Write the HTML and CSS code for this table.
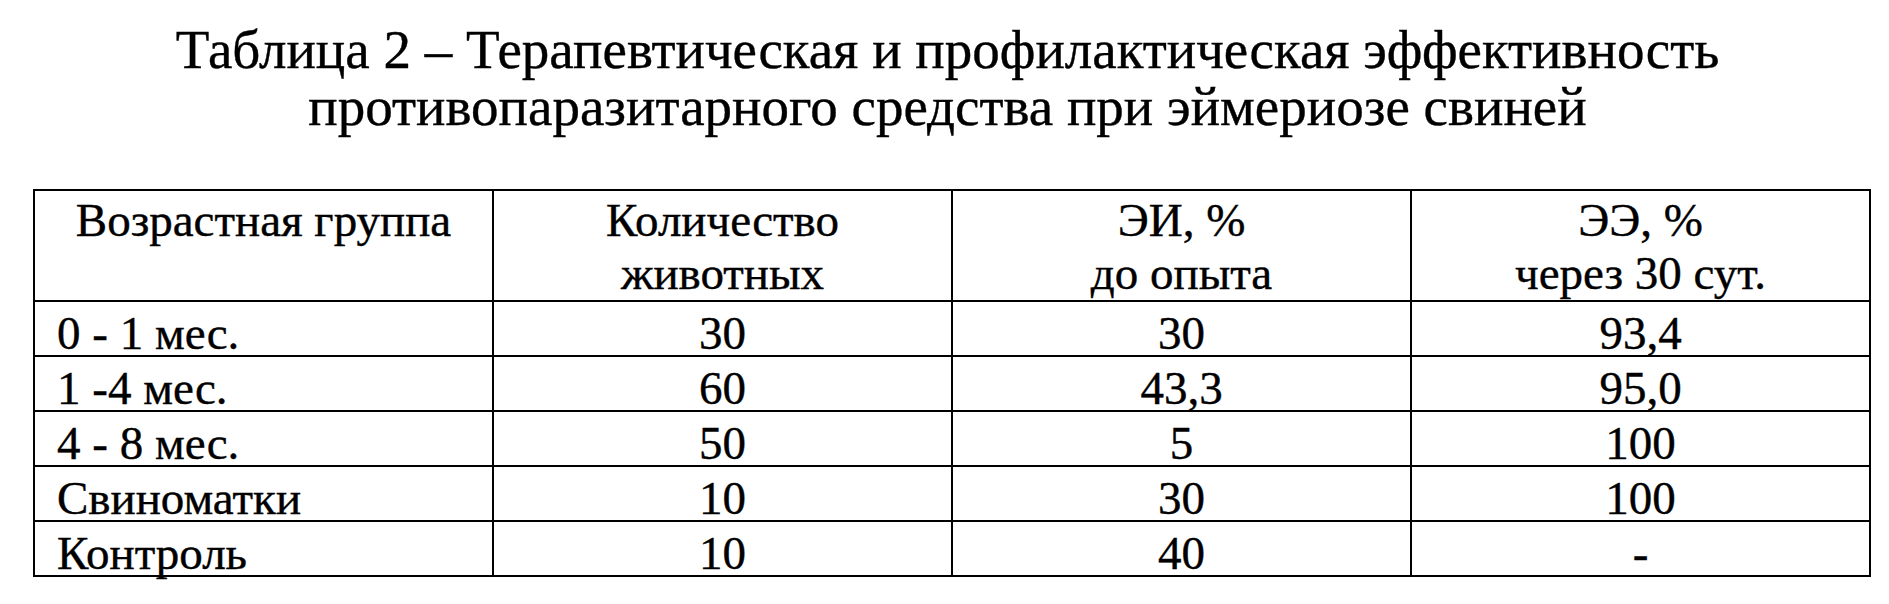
FILE: index.html
```html
<!DOCTYPE html>
<html lang="ru">
<head>
<meta charset="utf-8">
<title>Таблица 2</title>
<link rel="stylesheet" href="styles.css">
</head>
<body>
<div class="page">
  <h1 class="caption">
    <span class="caption-line">Таблица 2 – Терапевтическая и профилактическая эффективность</span>
    <span class="caption-line">противопаразитарного средства при эймериозе свиней</span>
  </h1>
  <table class="data">
    <colgroup>
      <col class="c"><col class="c"><col class="c"><col class="c">
    </colgroup>
    <thead>
      <tr>
        <th>Возрастная группа</th>
        <th>Количество<br>животных</th>
        <th>ЭИ, %<br>до опыта</th>
        <th>ЭЭ, %<br>через 30 сут.</th>
      </tr>
    </thead>
    <tbody>
      <tr><td class="name">0 - 1 мес.</td><td>30</td><td>30</td><td>93,4</td></tr>
      <tr><td class="name">1 -4 мес.</td><td>60</td><td>43,3</td><td>95,0</td></tr>
      <tr><td class="name">4 - 8 мес.</td><td>50</td><td>5</td><td>100</td></tr>
      <tr><td class="name">Свиноматки</td><td>10</td><td>30</td><td>100</td></tr>
      <tr><td class="name">Контроль</td><td>10</td><td>40</td><td>-</td></tr>
    </tbody>
  </table>
</div>
</body>
</html>
```

FILE: styles.css
```css
html, body {
  margin: 0;
  padding: 0;
  background: #ffffff;
}

body {
  width: 1889px;
  height: 604px;
  overflow: hidden;
  color: #000000;
  font-family: "Liberation Serif", "Times New Roman", serif;
  -webkit-text-stroke: 0.4px #000000;
}

.page {
  padding-top: 21px;
}

.caption {
  margin: 0;
  font-weight: normal;
  font-size: 55px;
  line-height: 57px;
  text-align: center;
  display: flex;
  flex-direction: column;
  align-items: center;
  padding-left: 6px;
}

.data {
  margin-top: 54px;
  margin-left: 33px;
  width: 1838px;
  border-collapse: collapse;
  table-layout: fixed;
  font-size: 47px;
}

.data col.c {
  width: 25%;
}

.data th,
.data td {
  border: 2px solid #000000;
  padding: 0;
  text-align: center;
  box-sizing: border-box;
}

.data th {
  font-weight: normal;
  vertical-align: top;
  line-height: 53px;
  padding-top: 3px;
  height: 106px;
}

.data td {
  height: 55px;
  line-height: 44px;
  vertical-align: bottom;
}

.data td.name {
  text-align: left;
  padding-left: 22px;
}
```
